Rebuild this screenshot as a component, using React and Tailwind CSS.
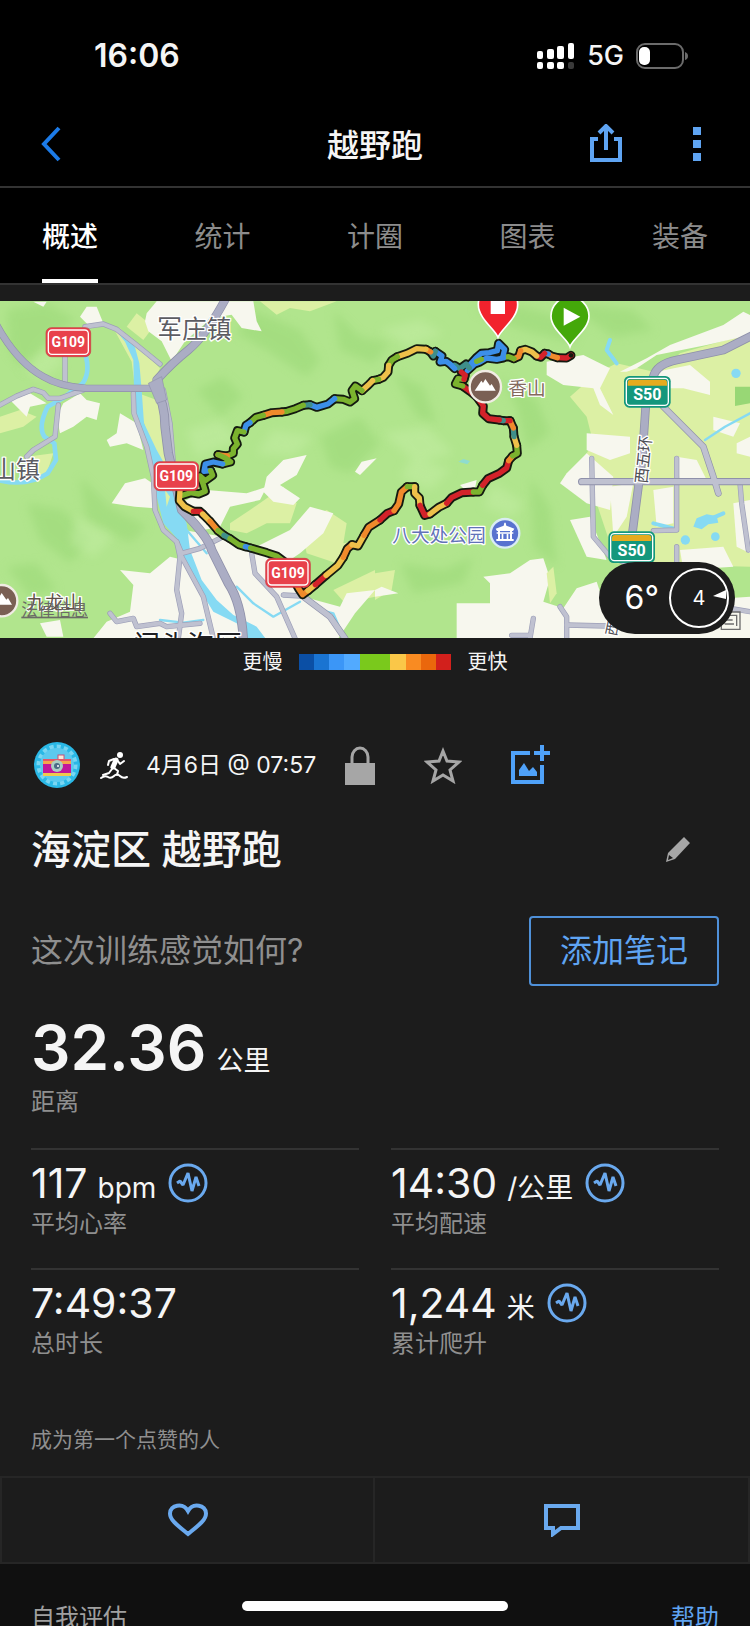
import React, { useState } from 'react';

const TABS = ['概述', '统计', '计圈', '图表', '装备'];

const PACE_COLORS = [
  { id: 'p1', bg: 'bg-[#0b4fa5]' },
  { id: 'p2', bg: 'bg-[#1a74d2]' },
  { id: 'p3', bg: 'bg-[#3b96f7]' },
  { id: 'p4', bg: 'bg-[#52aaff]' },
  { id: 'p5', bg: 'bg-[#7ac91c]' },
  { id: 'p6', bg: 'bg-[#7ac91c]' },
  { id: 'p7', bg: 'bg-[#fac748]' },
  { id: 'p8', bg: 'bg-[#f98b22]' },
  { id: 'p9', bg: 'bg-[#ea670c]' },
  { id: 'p10', bg: 'bg-[#d2201c]' }
];

const STATS = [
  { label: '平均心率', value: '117', unit: 'bpm', chart: true },
  { label: '平均配速', value: '14:30', unit: '/公里', chart: true },
  { label: '总时长', value: '7:49:37' },
  { label: '累计爬升', value: '1,244', unit: '米', chart: true }
];

const RED = '#d3222a';
const ORANGE = '#f08a2c';
const YELLOW = '#eec04a';
const GREEN = '#7bb32e';
const TEAL = '#3f8f8a';
const BLUE = '#3c8fe8';

// GPS track, split by pace
const TRACK = [
  [RED, '1713,196 1700,204 1672,203'],
  [ORANGE, '1672,203 1655,198 1645,192'],
  [BLUE, '1645,192 1634,190'],
  [RED, '1634,190 1622,202 1610,198'],
  [YELLOW, '1610,198 1596,186 1576,178 1562,182'],
  [ORANGE, '1562,182 1556,200 1542,206'],
  [GREEN, '1542,206 1526,200 1508,202'],
  [BLUE, '1508,202 1514,178 1496,160 1492,182 1468,188 1444,190 1428,204 1408,226'],
  [BLUE, '1510,204 1490,208 1460,204 1440,216 1424,222 1402,242'],
  [GREEN, '1444,208 1430,214'],
  [TEAL, '1408,234 1398,222 1380,236 1364,226'],
  [BLUE, '1364,236 1350,222 1338,214 1320,216 1326,198 1306,184'],
  [TEAL, '1306,184 1300,198 1292,186'],
  [ORANGE, '1292,186 1278,178'],
  [YELLOW, '1278,178 1250,176 1222,190 1192,200'],
  [GREEN, '1192,200 1176,210 1166,226'],
  [YELLOW, '1166,226 1164,246 1150,262 1136,268'],
  [GREEN, '1136,268 1118,272'],
  [YELLOW, '1118,272 1104,286 1086,302'],
  [GREEN, '1086,302 1066,288 1056,302 1064,326 1050,336 1030,328 1004,326'],
  [BLUE, '1004,326 984,342 950,352 930,344'],
  [TEAL, '930,344 910,346'],
  [GREEN, '910,346 886,356 862,364 846,366'],
  [ORANGE, '846,366 816,368 790,376'],
  [GREEN, '790,376 768,382 750,398'],
  [BLUE, '750,398 738,406 732,426'],
  [GREEN, '732,426 712,422 704,444 712,462 700,476 700,490 682,498'],
  [ORANGE, '682,498 668,496 654,494'],
  [GREEN, '654,494 676,504 692,516 668,522'],
  [BLUE, '668,522 640,516 616,522 612,544 632,542'],
  [GREEN, '632,542 638,556 616,572 600,558 610,584 616,604 596,612 572,608 548,616'],
  [YELLOW, '540,602 538,632 554,650 580,664'],
  [RED, '580,664 600,664 608,672'],
  [YELLOW, '608,672 630,694'],
  [ORANGE, '630,694 654,722'],
  [GREEN, '654,722 672,736'],
  [TEAL, '672,736 690,746'],
  [GREEN, '690,746 716,764 736,770'],
  [BLUE, '736,770 752,774'],
  [GREEN, '752,774 800,788 830,798 852,814 880,868'],
  [ORANGE, '880,868 896,896 908,914 924,902'],
  [YELLOW, '924,902 946,884'],
  [RED, '946,884 978,856'],
  [YELLOW, '978,856 1014,826 1030,802'],
  [ORANGE, '1030,802 1042,776 1056,764'],
  [YELLOW, '1056,764 1074,768 1092,736'],
  [ORANGE, '1092,736 1106,712 1140,690'],
  [RED, '1140,690 1162,670 1182,662'],
  [ORANGE, '1182,662 1196,642 1204,606 1222,590'],
  [GREEN, '1222,590 1244,590'],
  [YELLOW, '1244,590 1244,610 1258,624 1260,646'],
  [RED, '1260,646 1274,676 1290,672'],
  [YELLOW, '1290,672 1316,652 1340,640'],
  [RED, '1340,640 1356,622 1386,608 1420,606'],
  [GREEN, '1420,606 1438,606 1448,586'],
  [RED, '1448,586 1464,566 1498,550 1520,534 1526,512'],
  [ORANGE, '1526,512 1538,498'],
  [GREEN, '1538,498 1552,490 1550,466'],
  [YELLOW, '1550,466 1542,440'],
  [TEAL, '1542,440 1540,414'],
  [ORANGE, '1540,414 1530,392'],
  [RED, '1530,392 1510,392'],
  [TEAL, '1510,392 1498,390'],
  [RED, '1498,390 1466,386 1448,370 1450,348 1430,320'],
  [RED, '1430,320 1410,304 1388,288'],
  [GREEN, '1388,288 1366,282 1374,266 1392,268'],
  [RED, '1392,268 1396,256 1384,246']
];

const MINOR_ROADS = [
  '0,345 50,318 100,298 130,308 145,325 180,325 250,300',
  '195,200 195,280',
  '255,110 310,102 350,118 410,165 480,222',
  '400,310 402,370 440,470 460,560 465,660 490,720 530,755 545,790 600,775 660,745',
  '530,755 540,800 530,900 545,970 535,1045',
  '545,800 610,920 640,1045',
  '175,345 165,440 100,480 80,500',
  '490,300 510,400 520,520',
  '330,970 350,995 400,985 410,1010 480,1000 500,1010 600,1000',
  '755,790 765,850 830,920 885,1045',
  '850,915 905,918',
  '1775,505 1780,740 1830,800 1880,820',
  '2030,505 2030,720 1960,722',
  '2030,770 2030,830',
  '2220,580 2225,640 2245,780',
  '1680,950 1700,980 1700,1045',
  '1700,1005 1820,1008',
  '1600,985 1590,1045',
  '1535,1036 1590,1036',
  '2160,950 2250,965'
];

const STAT_ICON_BLUE = '#6aa9ee';

function RoadShield({ x, y }) {
  return (
    <g>
      <rect x={x} y={y} width="134" height="87" rx="16" fill="#e8414b" stroke="#c93640" strokeWidth="2" />
      <rect x={x + 7} y={y + 7} width="120" height="73" rx="11" fill="none" stroke="#fff" strokeWidth="4" />
      <text
        x={x + 67}
        y={y + 59}
        textAnchor="middle"
        fontSize="42"
        fontWeight="700"
        fill="#fff"
        className="font-['Liberation_Sans_Narrow','Roboto',sans-serif]"
      >
        G109
      </text>
    </g>
  );
}

function ExpresswayShield({ x, y }) {
  return (
    <g>
      <rect x={x} y={y} width="140" height="95" rx="16" fill="#14977c" />
      <rect x={x + 7} y={y + 7} width="126" height="81" rx="11" fill="none" stroke="#fff" strokeWidth="4" />
      <path d={`M${x + 11} ${y + 29}v-9q0-9 9-9h100q9 0 9 9v9z`} fill="#e5ab1f" />
      <text
        x={x + 70}
        y={y + 73}
        textAnchor="middle"
        fontSize="48"
        fontWeight="700"
        fill="#fff"
        className="font-['Roboto',sans-serif]"
      >
        S50
      </text>
    </g>
  );
}

function MountainPin({ cx, cy }) {
  return (
    <g>
      <circle cx={cx} cy={cy} r="47" fill="#7a6054" stroke="#f1ece4" strokeWidth="7" />
      <path d={`M${cx - 32} ${cy + 12}l20-30 5 7 7-12 14 20 5-5 12 20z`} fill="#fff" />
    </g>
  );
}

function RouteMap() {
  const outline = { fill: 'none', strokeLinejoin: 'round', strokeLinecap: 'round' };

  return (
    <svg
      viewBox="0 33 2250 1011"
      className="block w-full font-['Inter','Noto_Sans_CJK_SC',sans-serif]"
      role="img"
      aria-label="路线地图"
    >
      <defs>
        <filter id="soft" x="-20%" y="-20%" width="140%" height="140%">
          <feGaussianBlur stdDeviation="14" />
        </filter>
      </defs>
      <rect y="33" width="2250" height="1011" fill="#b1e58d" />

      {/* Hill shading */}
      <g fill="#98d775" opacity="0.5" filter="url(#soft)">
        <path d="M20 60l120-20 90 50-50 30-60 60-40 70-50-60z" />
        <path d="M760 60l140 60 60 90-40 50-120-80-90-50z" />
        <path d="M1000 60l80 80 90 20-50 60-100-40z" />
        <path d="M80 640l110 20 80 90-60 70-90-70z" />
        <path d="M240 560l90 90 110 60-50 50-130-70z" />
        <path d="M20 830l90-10 60 80-80 20z" />
        <path d="M590 300l80-40 60 60-70 60z" />
        <path d="M960 440l120-60 60 80-90 90-60-20z" />
        <path d="M1180 250l90 40 40 110-60-20z" />
        <path d="M1500 260l110 70 40 100-70 50-30-130z" />
        <path d="M1590 560l60 90 20 180-70-60z" />
        <path d="M1200 820l130 20 90-40-30 80-150 30z" />
        <path d="M1420 60l150-10 180 50-30 60-150-40z" />
        <path d="M1700 40l200 20 60 60-120 20z" />
      </g>
      <g fill="#c4eea4" opacity="0.5" filter="url(#soft)">
        <path d="M60 230l60 40 70-50-20-60z" />
        <path d="M560 420l100-30 60 60-130 50z" />
        <path d="M820 420l120 20-60 60-110-10z" />
        <path d="M1150 430l130-20 80 80-110 30z" />
        <path d="M230 680l110 60-60 60-70-40z" />
        <path d="M1140 120l120-30 70 40-100 40z" />
        <path d="M1480 580l90 60-30 40-90-30z" />
        <path d="M1200 560l40-60 110 40-60 60z" />
      </g>

      {/* Farmland */}
      <g fill="#dcf0a4">
        <path d="M270 100l90 15 60 60 60 60-25 50-50 10-10-80-60-110-60 10z" />
        <path d="M415 310l55 20 25 90 20 90-30 20-40-90-25-80z" />
        <path d="M0 380l60-20 50 20-40 30-70 20z" />
        <path d="M80 500l80-10-20 60-60 20z" />
        <path d="M690 700l60-40 100-70 40 50-20 60-70 0-60 30-50-10z" />
        <path d="M900 700l80-40 60 40-10 60 60-10-80 70-90-30z" />
        <path d="M1000 900l125-60 0 80-90 20z" />
        <path d="M380 110l30-40 50 40-30 40z" />
        <path d="M1125 850l60-10-10 60-50 30z" />
        <path d="M1790 250l60-30 130 30 60-60 210-60 0 700-400-10-60-180-70-90 60-90-20-80-50-60z" />
        <path d="M600 830l60 20 40 70-30 30-60-60z" />
        <path d="M780 34h230l-80 30-60-10-40 20z" />
      </g>

      {/* Built-up areas */}
      <g fill="#f7f7ee">
        <path d="M440 70l30-36h290l10 60 15 30-60-10-30-40-60 10-80 70-40 60-30-60-40-30-10-30z" />
        <path d="M100 35h40l-10 15z" />
        <path d="M190 340l50-30 20 20 40 10-10 50-30-10-40 30-40 20-10-50z" />
        <path d="M240 80l20-30 30 0 20 50-40 10z" />
        <path d="M320 450l30-20 10-60 50 30 20 80-50-20-50 10z" />
        <path d="M30 330l60-20 50 30-50 10-10 30z" />
        <path d="M335 640l40-60 60-15 30 20 0 70-60-5z" />
        <path d="M800 560l50-50 70-15-30 60-50 30 60 40-20 20-60-10-30-30z" />
        <path d="M1065 545l20-30 45-10-50 50z" />
        <path d="M540 640l80-40 120 10 60-20-20 40-90 20-30 60-50 10-70-40z" />
        <path d="M550 720l120 20 180 70 60 110 110 30 20-40 85-10-60 70-60 90H600z" />
        <path d="M360 840l90 10 60-50 40 10 80 100 80 70 20 65H280l40-50 70-30 10-80z" />
        <path d="M120 1000l60-10 10 50h-50z" />
        <path d="M750 780l120-60 60-70 70 20-30 60-70 60-60 40z" />
        <path d="M1380 585l50-15-5 25-30 5z" />
        <path d="M1640 215l110-20 80 40-30 60 40 80-40-30-20-50-90-10-50-30z" />
        <path d="M1860 245l80-40 70-40 160-60 60-40 20 10v60l-130 30-150 30-60 40-30 10z" />
        <path d="M1970 245l100-20 60 50 0 40-80-20-60 0z" />
        <path d="M1700 550l60-60 80 70-10 100-70-20-80-60z" />
        <path d="M1760 430l130 10 0 50-60 20-70-30z" />
        <path d="M1830 590l70-10-20 100-40 60z" />
        <path d="M1960 600l60-10 0 110-50 10z" />
        <path d="M2030 500l60 10 30 60-80 10z" />
        <path d="M1710 690l60-10 50 130-60-10z" />
        <path d="M1370 940h100v-60l-20-20 80-10 60-40 40-5 20 60-20 70 60 20 40-60 60-20 20 60 60-10-30 60v60h-470z" />
        <path d="M1125 920l70-10-50-20-20 10z" />
        <path d="M1800 950l450-30v124h-470z" />
        <path d="M2040 780l130-10 30 60-150 10z" />
        <path d="M2200 640l50-10v160l-40-20z" />
        <path d="M2140 380l80 20-20 40-60-20z" />
        <path d="M2210 460l40-20v60l-40-10z" />
      </g>
      <path d="M1640 850l20-20 10 80-20 30z" fill="#dcf0a4" />

      {/* Water */}
      <path
        d="M345 118L368 125L405 172L418 220L425 300L432 400L470 480L515 560L530 640L560 700L570 780L605 870L650 930L700 975L770 1010L800 1050L745 1050L710 1000L640 965L600 900L560 830L535 750L490 700L470 620L455 540L425 440L405 370L402 300L400 210L375 155Z"
        fill="#86daf3"
      />
      <path d="M495 600l15 20-10 30z" fill="#dcf0a4" />
      <g {...outline} stroke="#86daf3">
        <path d="M258 200q12 50-10 80l-60 45-45 25q-30 60-10 90l30 20 5 50-25 40q-60 40-140 22" strokeWidth="14" />
        <path d="M560 720l60 70M710 890l50 50 60 40 80-45M480 990l70 8 60-8" strokeWidth="7" />
        <path d="M960 960l40 10 30 70M2115 450l60-40 75-40" strokeWidth="7" />
        <path d="M1830 150l-10 30 30 40M2100 700l70-30M1960 700l60 15" strokeWidth="12" />
      </g>
      <path d="M2080 710l10-25 30-12 30 5 5 20-30 5-20 15z" fill="#86daf3" />
      <circle cx="2056" cy="750" r="14" fill="#86daf3" />
      <circle cx="2146" cy="740" r="13" fill="#86daf3" />
      <circle cx="2208" cy="250" r="14" fill="#86daf3" />
      <path d="M2205 290h45v50l-45 8z" fill="#98d775" />
      <path d="M1375 515l15-8 20 6-8 10z" fill="#8fdccf" />

      {/* Roads */}
      <g {...outline} stroke="#9d9fb8" strokeWidth="16">
        {MINOR_ROADS.map((points) => <polyline key={points} points={points} />)}
      </g>
      <g {...outline} stroke="#bfc1d0" strokeWidth="12">
        {MINOR_ROADS.map((points) => <polyline key={points} points={points} />)}
      </g>
      <g {...outline} stroke="#8f91aa">
        <path d="M-10 105q60 110 140 155 50 30 130 35h190M1745 575h505" strokeWidth="22" />
        <path d="M675 30q-60 110-110 150t-95 90" strokeWidth="26" />
        <path d="M465 290q30 50 30 120l10 80 40 170q80 80 90 120l50 100q40 60 45 170" strokeWidth="28" />
        <path d="M910 920l80 60 45 65M1990 350l60 60 60 60 30 90 15 50" strokeWidth="20" />
        <path d="M2260 135l-90 45-140 30q-60 12-70 50M1937 350l-10 150-30 230" strokeWidth="26" />
      </g>
      <g {...outline} stroke="#abadc4">
        <path d="M-10 105q60 110 140 155 50 30 130 35h190" strokeWidth="18" />
        <path d="M675 30q-60 110-110 150t-95 90" strokeWidth="22" />
        <path d="M465 290q30 50 30 120l10 80 40 170q80 80 90 120l50 100q40 60 45 170" strokeWidth="23" />
        <path d="M2260 135l-90 45-140 30q-60 12-70 50M1937 350l-10 150-30 230" strokeWidth="21" />
      </g>
      <path d="M1745 575h505M910 920l80 60 45 65M1990 350l60 60 60 60 30 90 15 50" {...outline} stroke="#bfc1d0" strokeWidth="16" />
      <path d="M445 280l40-20 15 70-30 10z" fill="#abadc4" stroke="#8f91aa" strokeWidth="2" />

      {/* Track */}
      <g {...outline} stroke="#141a10" strokeWidth="27">
        {TRACK.map(([, points]) => <polyline key={points} points={points} />)}
      </g>
      <g {...outline} strokeWidth="16">
        {TRACK.map(([color, points]) => <polyline key={points} points={points} stroke={color} />)}
      </g>
      <circle cx="1713" cy="196" r="7" fill="#141a10" />

      {/* Labels */}
      <g stroke="#fff" strokeWidth="8" strokeLinejoin="round" className="[paint-order:stroke]">
        <text x="472" y="144" fontSize="74" fill="#5c5c62">军庄镇</text>
        <text x="-24" y="565" fontSize="72" fill="#5c5c62">山镇</text>
        <text x="80" y="958" fontSize="56" fill="#5f5148">九龙山</text>
        <text x="398" y="1096" fontSize="82" fill="#1f1f22">门头沟区</text>
        <text x="1525" y="314" fontSize="56" fill="#84695d">香山</text>
        <text x="1177" y="755" fontSize="56" fill="#6272b8">八大处公园</text>
        <text x="1940" y="582" fontSize="48" fill="#4e4e54" transform="rotate(-84 1940 582)">西五环</text>
        <text x="1848" y="1040" fontSize="44" fill="#4e4e54" transform="rotate(-78 1848 1040)">西</text>
      </g>
      <a href="#legal">
        <text x="64" y="977" fontSize="50" fill="#6b6b66" textDecoration="underline">法律信息</text>
      </a>
      <g fill="none" stroke="#6e6e6e" strokeWidth="4">
        <path d="M2164 966h56v52h-56zM2172 976h38v32M2174 990h24M2174 1002h28" />
      </g>

      <RoadShield x={138} y={113} />
      <RoadShield x={462} y={515} />
      <RoadShield x={797} y={805} />
      <ExpresswayShield x={1872} y={258} />
      <ExpresswayShield x={1825} y={724} />

      <MountainPin cx={1456} cy={290} />
      <MountainPin cx={5} cy={932} />

      <circle cx="1515" cy="730" r="43" fill="#5872cf" stroke="#d9ecf4" strokeWidth="7" />
      <g fill="#fff">
        <path d="M1513 698h4l2 9 24 9-4 7h-48l-4-7 24-9z" />
        <path d="M1494 721h6v26h-6zM1530 721h6v26h-6zM1505 731h5v16h-5zM1520 731h5v16h-5z" />
        <path d="M1490 727h50v4h-50zM1489 747h52v6h-52z" />
      </g>

      {/* Finish and start pins */}
      <path d="M1494 142c-8-24-59-56-59-98a59 59 0 0 1 118 0c0 42-51 74-59 98z" fill="#f2222d" stroke="#fff" strokeWidth="5" />
      <path d="M1472 28h43v44h-43z" fill="#fff" />
      <path d="M1710 170c-8-24-57-52-57-92a57 57 0 0 1 114 0c0 40-49 68-57 92z" fill="#44a80a" stroke="#fff" strokeWidth="5" />
      <path d="M1691 53v54l50-27z" fill="#fff" />
    </svg>
  );
}

function WeatherPill() {
  return (
    <div className="absolute right-[15px] bottom-1 flex h-[72px] w-[136px] items-center justify-end gap-[10px] rounded-full bg-[#1d1d1d] pr-[6px]">
      <span className="text-[32px] leading-none text-white">6°</span>
      <div className="relative flex h-15 w-15 items-center justify-center rounded-full border-2 border-white">
        <span className="text-xl leading-none text-white">4</span>
        <svg viewBox="0 0 14 10" className="absolute top-5 right-0 h-[10px] w-[14px]" fill="#fff">
          <path d="M0 6L13 0v9z" />
        </svg>
      </div>
    </div>
  );
}

function StatusBar() {
  return (
    <div className="flex h-28 items-center justify-between pr-[62px] pl-[94px]">
      <span className="text-[32px] leading-10 font-semibold">16:06</span>
      <div className="flex items-center gap-3">
        <svg viewBox="0 0 38 28" className="h-7 w-[38px]" fill="#fff">
          <rect x="0" y="9" width="6" height="8" rx="2" />
          <rect x="10" y="7" width="7" height="10" rx="2" />
          <rect x="20" y="4" width="7" height="13" rx="2" />
          <rect x="31" y="1" width="6" height="16" rx="2" />
          <rect x="0" y="20" width="6" height="7" rx="2" />
          <rect x="10" y="20" width="7" height="7" rx="2" />
          <rect x="20" y="20" width="7" height="7" rx="2" />
          <rect x="31" y="20" width="6" height="7" rx="2" fill="#3a3a3a" />
        </svg>
        <span className="text-[27px] leading-8 font-medium">5G</span>
        <svg viewBox="0 0 52 26" className="h-[26px] w-[52px]">
          <rect x="1" y="1" width="46" height="24" rx="8" fill="none" stroke="#6b6b6b" strokeWidth="2" />
          <path d="M49 9q3 1 3 4t-3 4z" fill="#6b6b6b" />
          <rect x="3" y="4" width="11" height="18" rx="5" fill="#fff" />
        </svg>
      </div>
    </div>
  );
}

function ChartBadge() {
  return (
    <svg viewBox="0 0 40 40" className="h-10 w-10" fill="none" stroke={STAT_ICON_BLUE}>
      <circle cx="20" cy="20" r="18" strokeWidth="3" />
      <path d="M9 20l3-2 3 4 5-12 4 18 4-14 3 9" strokeWidth="3" strokeLinejoin="bevel" />
    </svg>
  );
}

function Stat({ stat }) {
  return (
    <div className="h-[120px] border-t-2 border-[#333] pt-[13px]">
      <div className="flex h-10 items-center gap-3">
        <div className="flex items-baseline gap-[10px]">
          <span className="text-[41px] leading-10">{stat.value}</span>
          {stat.unit && <span className="text-[28px] leading-7">{stat.unit}</span>}
        </div>
        {stat.chart && (
          <button type="button" aria-label={`${stat.label}图表`}>
            <ChartBadge />
          </button>
        )}
      </div>
      <p className="mt-[7px] text-2xl leading-7 text-[#8f8f8f]">{stat.label}</p>
    </div>
  );
}

function Avatar() {
  return (
    <svg viewBox="0 0 46 46" className="h-[46px] w-[46px]">
      <circle cx="23" cy="23" r="23" fill="#2ab8e6" />
      <circle cx="23" cy="23" r="18" fill="none" stroke="#7ad6f2" strokeWidth="5" strokeDasharray="4 3" />
      <circle cx="23" cy="23" r="17" fill="#5cc9ee" />
      <rect x="24" y="13" width="6" height="6" fill="#f6e9d8" stroke="#c4507a" strokeWidth="1" />
      <rect x="9" y="17" width="28" height="4" fill="#e2566a" />
      <rect x="9" y="19" width="28" height="3" fill="#f4a64c" />
      <rect x="9" y="22" width="28" height="9" fill="#c2179a" />
      <rect x="9" y="31" width="28" height="3" fill="#f0c94e" />
      <circle cx="23" cy="24" r="6" fill="#a9cfc4" />
      <circle cx="23" cy="24" r="3" fill="#4a6b86" />
      <circle cx="24" cy="24" r="1" fill="#fff" />
    </svg>
  );
}

function RunnerIcon() {
  return (
    <svg viewBox="0 0 28 28" className="h-7 w-7" fill="none" stroke="#fff" strokeLinecap="round" strokeLinejoin="round">
      <circle cx="20" cy="4" r="3" fill="#fff" stroke="none" />
      <path d="M16 9l-3 7" strokeWidth="5" />
      <path d="M14 8l-5 2-1 4M18 10l2 3 4-3M14 17l4 3-1 4M12 18l-3 4-6 2" strokeWidth="2" />
      <path d="M1 27q4-3 7-1t6-1 6 0 7 1" strokeWidth="2" />
    </svg>
  );
}

export default function App() {
  const [activeTab, setActiveTab] = useState('概述');

  return (
    <div className="relative flex h-screen flex-col overflow-hidden bg-[#1c1c1c] font-['Inter','Noto_Sans_CJK_SC',sans-serif] text-[#f5f5f5]">
      <header className="shrink-0 bg-black">
        <StatusBar />
        <div className="grid h-[76px] grid-cols-3 items-start border-b-2 border-[#333] pr-12 pl-10">
          <button type="button" aria-label="返回" className="mt-[14px] w-6">
            <svg viewBox="0 0 24 36" className="h-9 w-6" fill="none" stroke="#1c7be8" strokeWidth="4">
              <path d="M19 2L4 18l15 16" />
            </svg>
          </button>
          <h1 className="mt-[14px] pl-2 text-center text-[32px] leading-10 font-medium">越野跑</h1>
          <div className="mt-3 flex justify-end gap-[70px]">
            <button type="button" aria-label="分享">
              <svg viewBox="0 0 32 38" className="h-[38px] w-8" fill="none" stroke="#5fa4f2" strokeWidth="4">
                <path d="M8 15H2v21h28V15h-6M16 26V3" />
                <path d="M9 9l7-7 7 7" />
              </svg>
            </button>
            <button type="button" aria-label="更多">
              <svg viewBox="0 0 10 38" className="h-[38px] w-[10px]" fill="#5fa4f2">
                <path d="M1 3h8v8H1zM1 16h8v8H1zM1 29h8v8H1z" />
              </svg>
            </button>
          </div>
        </div>
        <nav className="flex h-[97px] justify-between border-b-2 border-[#333] px-[42px]">
          {TABS.map((tab) => (
            <button
              key={tab}
              type="button"
              onClick={() => setActiveTab(tab)}
              className={`flex h-full items-center border-b-4 pt-[6px] text-[28px] leading-10 ${
                activeTab === tab
                  ? 'border-white font-medium text-white'
                  : 'border-transparent text-[#8c8c8c]'
              }`}
            >
              {tab}
            </button>
          ))}
        </nav>
      </header>

      <main className="flex-1 overflow-y-auto [scrollbar-width:none]">
        <div className="relative mt-4">
          <RouteMap />
          <WeatherPill />
        </div>

        <div className="flex h-[46px] items-center justify-center gap-4 pt-[2px] text-xl">
          <span>更慢</span>
          <div className="flex h-4 w-[153px]">
            {PACE_COLORS.map((c) => (
              <div key={c.id} className={`flex-1 ${c.bg}`} />
            ))}
          </div>
          <span>更快</span>
        </div>

        <section className="px-[31px]">
          <div className="mt-[58px] flex items-center pl-[3px]">
            <Avatar />
            <div className="ml-5">
              <RunnerIcon />
            </div>
            <time className="ml-[18px] text-[23px] leading-8">4月6日 @ 07:57</time>
            <div className="ml-7 flex items-center gap-12">
              <button type="button" aria-label="隐私">
                <svg viewBox="0 0 32 40" className="h-10 w-8" fill="#a6a6a6">
                  <path d="M1 18h30v22H1z" />
                  <path d="M8 19v-7a8 9 0 0 1 16 0v7" fill="none" stroke="#a6a6a6" strokeWidth="3" />
                </svg>
              </button>
              <button type="button" aria-label="收藏">
                <svg viewBox="0 0 38 38" className="h-[38px] w-[38px]" fill="none" stroke="#a6a6a6" strokeWidth="3">
                  <path d="M19 5l4 10 12 1-9 8 3 11-10-6-10 6 3-11-9-8 12-1z" />
                </svg>
              </button>
              <button type="button" aria-label="添加照片">
                <svg viewBox="0 0 40 40" className="h-10 w-10" fill="#4fa1f8">
                  <path d="M20 8H3v29h29V20" fill="none" stroke="#4fa1f8" strokeWidth="4" />
                  <path d="M30 0h4v6h6v4h-6v6h-4v-6h-6V6h6zM9 31v-6l5-7 5 8 4-4 4 5v4z" />
                </svg>
              </button>
            </div>
          </div>

          <div className="mt-[38px] flex items-center justify-between pr-7">
            <h2 className="text-[40px] leading-[48px] font-medium">海淀区 越野跑</h2>
            <button type="button" aria-label="编辑名称">
              <svg viewBox="0 0 26 26" className="h-[26px] w-[26px]" fill="#a6a6a6">
                <path d="M19 0l6 6L10 22l-9 3 2-9zM4 18l-1 5 5-2z" fillRule="evenodd" />
              </svg>
            </button>
          </div>

          <div className="mt-[42px] flex items-center justify-between">
            <p className="text-[32px] leading-10 text-[#8f8f8f]">这次训练感觉如何?</p>
            <button
              type="button"
              className="h-[70px] w-[190px] rounded-sm border-2 border-[#4f90d8] text-[32px] leading-10 text-[#5fa4f2]"
            >
              添加笔记
            </button>
          </div>

          <div className="mt-[30px]">
            <div className="flex items-baseline gap-[10px]">
              <span className="text-[62px] leading-[64px] font-semibold">32.36</span>
              <span className="text-[27px] leading-7">公里</span>
            </div>
            <p className="mt-2 text-2xl leading-7 text-[#8f8f8f]">距离</p>
          </div>

          <div className="mt-8 grid grid-cols-2 gap-x-8">
            {STATS.map((stat) => (
              <Stat key={stat.label} stat={stat} />
            ))}
          </div>

          <p className="mt-[38px] text-[21px] leading-7 text-[#8f8f8f]">成为第一个点赞的人</p>
        </section>

        <div className="mt-[22px] grid h-[88px] grid-cols-2 divide-x-2 divide-[#262626] border-2 border-[#262626]">
          <button type="button" aria-label="点赞" className="flex items-center justify-center">
            <svg viewBox="0 0 40 34" className="h-[34px] w-10" fill="none" stroke="#6aa9ee" strokeWidth="4">
              <path d="M20 31C9 22 2 17 2 10.500C2 2 15-1 20 8C25-1 38 2 38 10.500C38 17 31 22 20 31z" />
            </svg>
          </button>
          <button type="button" aria-label="评论" className="flex items-center justify-center">
            <svg viewBox="0 0 36 34" className="h-[34px] w-9" fill="none" stroke="#6aa9ee" strokeWidth="4">
              <path d="M2 3h32v22H17l-8 6v-6H2z" />
            </svg>
          </button>
        </div>

        <section className="flex justify-between bg-[#101010] px-[31px] pt-[38px] pb-12 text-2xl leading-8">
          <h3 className="text-[#a0a0a0]">自我评估</h3>
          <a href="#help" className="text-[#5fa4f2]">帮助</a>
        </section>
      </main>

      {/* Home indicator */}
      <div className="absolute inset-x-0 bottom-[15px] mx-auto h-[10px] w-[266px] rounded-full bg-white" />
    </div>
  );
}
